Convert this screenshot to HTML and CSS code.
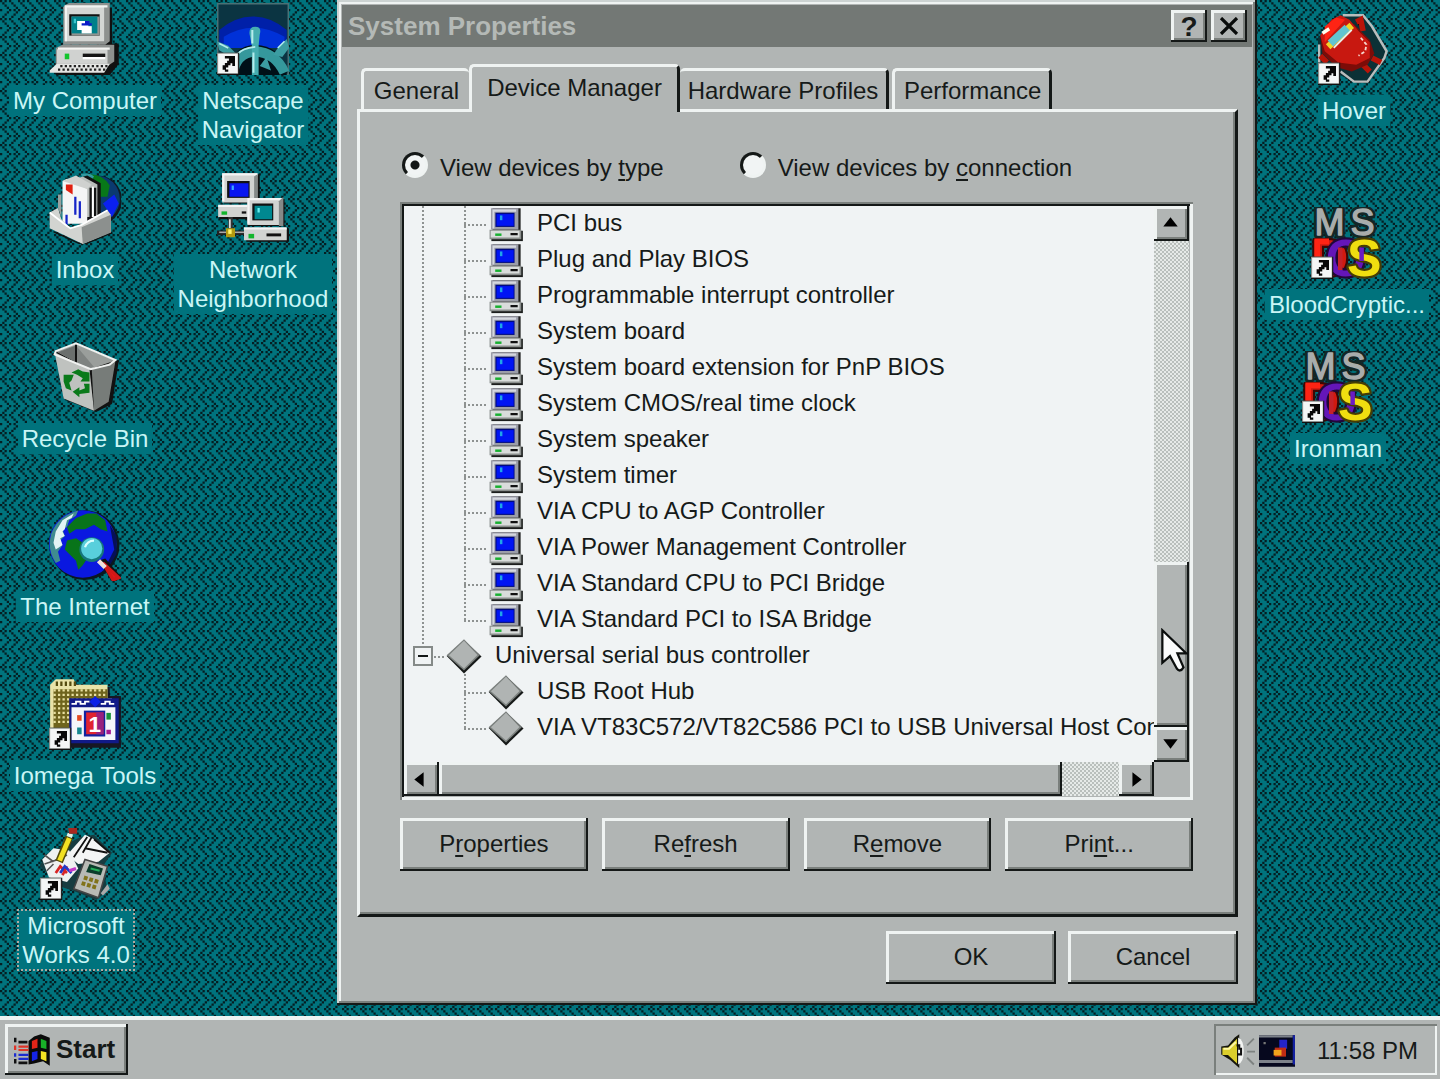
FILE: index.html
```html
<!DOCTYPE html>
<html lang="en">
<head>
<meta charset="utf-8">
<meta name="viewport" content="width=device-width, initial-scale=1">
<title>System Properties</title>
<link rel="stylesheet" href="styles.css">
</head>
<body>
<svg class="sprite" aria-hidden="true">
  <symbol id="shortcut" viewBox="0 0 10 10">
    <path d="M0 0H10V10H0Z" fill="#111"/><path d="M0 0H9.400V9.400H0Z" fill="#8a8f8c"/><path d="M.5 .5H9.200V9.200H.5Z" fill="#f4f6f6"/>
    <path d="M3.500 1.500H8V6H6.800V4.800H6V5.700H5V6.700H4V7.500H5V8.500H3.500V7.700H2.500V5.700H3.500V4.700H4.500V3.700H5.300V2.700H3.500Z" fill="#080808"/>
  </symbol>
  <symbol id="device" viewBox="0 0 16 16">
    <path d="M2 1H14.500V11H2Z" fill="#222"/><path d="M1.300 1H13.500V10.500H1.300Z" fill="#9b9da8"/><path d="M2 1.600H12.500V2.500H2.800V10H2Z" fill="#d5d8df"/>
    <path d="M3.300 3H11.800V9.300H3.300Z" fill="#000a80"/><path d="M3.800 3.600H11.400V8.800H3.800Z" fill="#0014f4"/><path d="M5.300 4.200H6.400V6.300H5.300Z" fill="#1ea6e8"/>
    <path d="M1.500 11H15.500V15.600H1.500Z" fill="#1b1d1c"/><path d="M.7 10.600H14.800V14.800H.7Z" fill="#8b8f8d"/><path d="M1.200 11H14V14H1.200Z" fill="#d9dcdb"/>
    <path d="M3.200 12.200H6V13.300H3.200Z" fill="#18b030"/><path d="M10 12H13.200V13H10Z" fill="#111"/>
  </symbol>
  <symbol id="diamond" viewBox="0 0 16 16">
    <path d="M8 1L15.800 8.200L8 15.800L.3 8Z" fill="#161918"/><path d="M8 .6L15 7.700L8 14.400L.3 7.700Z" fill="#7b807e"/><path d="M8 1.200L14 7.600L8 13.600L1.300 7.700Z" fill="#b0b4b3"/>
  </symbol>
  <symbol id="pc" viewBox="0 0 32 32">
    <path d="M9 2H28V18H31V27L27 32H3V30H25L28 25Z" fill="#111"/>
    <path d="M7 1L9 0H27V17L25 18.500H6.300V2Z" fill="#8e918f"/>
    <path d="M7 1.500H24.500V17H7Z" fill="#d4d6d4"/><path d="M7 1H26V2H8V17H7Z" fill="#f2f3f1"/>
    <path d="M9 5H22.500V14.500H9Z" fill="#111"/><path d="M10 6H22.500V14.500H10Z" fill="#8f9491"/><path d="M10 6H21.500V13.500H10Z" fill="#00808a"/>
    <path d="M12.500 8H17.500V12H12.500Z" fill="#fff"/><path d="M16 8H18V9H19V10H14.500V9H16Z" fill="#0a1ac8"/><path d="M14.500 10.300H19V13.500H14.500Z" fill="#fff"/><path d="M11 7H12V9H11Z" fill="#39c8d0"/>
    <path d="M3 20L6 18.500H29V26L26 28H3Z" fill="#8e918f"/><path d="M3.500 20.500H26V27H3.500Z" fill="#d0d2d0"/><path d="M4 19.800H27V20.800H4Z" fill="#f4f4f2"/>
    <path d="M7 22.500H9V25H7Z" fill="#12c52c"/><path d="M15 22.500H25V24H15Z" fill="#151515"/><path d="M15 24H25V25H15Z" fill="#fff"/>
    <path d="M3.500 27H27L24.500 31H.3V30Z" fill="#e4e5e3"/><path d="M5 28H27M4 29.600H26" stroke="#222" stroke-width="1" stroke-dasharray="1 1"/>
  </symbol>
  <symbol id="helm" viewBox="0 0 32 32">
    <path d="M0 0H32V32H0Z" fill="#0b3442"/><path d="M1 17V12Q8 6 16 6T31 12V20H1Z" fill="#0020a8"/><path d="M3 15Q16 7 30 15V20H3Z" fill="#0031d8"/>
    <path d="M.3 .3H31.700V31.700H.3Z" fill="none" stroke="#4a7074" stroke-width=".7"/><path d="M0 32H32V33H0Z" fill="#000"/>
    <path d="M5 32Q6 19 17 18.500Q28 19 31 30V32Z" fill="#001018"/>
    <path d="M7 32Q8 22 17 21.500Q26 22 30 31" fill="none" stroke="#35989c" stroke-width="4.500"/>
    <path d="M14.500 14Q14 10.500 17 10.500T19 14L18.500 19V32H15.500V19Z" fill="#46adb0"/><path d="M15.700 12V18M16.200 22V31" stroke="#b5ecec" stroke-width=".9"/>
    <path d="M0 17L5 19L8 22L6 24L1 21Z M31 16L27 20L25 23L29 24L32 20Z M22 24L19 28L24 30Z" fill="#3c9da2"/><path d="M1 18L5 20M30 17L27 20M9 23Q11 20 17 19.500" stroke="#b5ecec" stroke-width=".7" fill="none"/>
    <use href="#shortcut" x="0" y="22" width="10" height="10"/>
  </symbol>
  <symbol id="inbox" viewBox="0 0 32 32">
    <circle cx="21.500" cy="12.500" r="11" fill="#101820"/><circle cx="21" cy="12" r="10.500" fill="#0a3a70"/><path d="M18 1Q24 1 27 6L26 11H22L18 7Z" fill="#087818"/><path d="M24 14L29 10L31 14L28 20Z" fill="#0b20f0"/><path d="M14 1Q18 0 20 2L18 5Z" fill="#329aa0"/>
    <path d="M12 3L17 1.500L23 5V22L12 22Z" fill="#111"/><path d="M12 3L15 2L21.500 5.500V20H12Z" fill="#b9bdba"/><path d="M18.500 7V20M20.500 7V19.500" stroke="#111" stroke-width="1"/><path d="M19.500 6.500V20" stroke="#fff" stroke-width=".8"/>
    <path d="M6 4L8 3L17 7.500V23L6 23Z" fill="#f4f5f5"/><path d="M6 4L12 1.500L19 5.500L17 7.500Z" fill="#cfd1cf"/><path d="M7.500 5.500H10.500V10L9 9L7.500 8Z" fill="#e02010"/>
    <path d="M11.700 11V19M13.700 13V20.500M7.800 19V25" stroke="#1524c8" stroke-width="1"/>
    <path d="M.3 18L4 16L5.500 21L9.500 25L15 23L26 17L27.500 19V27L15 32L.3 25Z" fill="#d2d4d1"/><path d="M14.500 24.500L27.500 19V27L15 32Z" fill="#8c908e"/><path d="M.3 18L8 24L9.500 25L14.500 23.500L26 17" fill="none" stroke="#fff" stroke-width=".8"/><path d="M4 10V16L5.500 20V10Z" fill="#98a09d"/><path d="M28 27L15 32.500L2 26.500" fill="none" stroke="#111" stroke-width=".6"/>
  </symbol>
  <symbol id="network" viewBox="0 0 32 32">
    <path d="M3 1H19V14H3ZM1 15H15V21H1Z" fill="#111"/><path d="M2.300 .5H18V13.500H2.300Z" fill="#d1d3d1"/><path d="M2.300 .5H18V1.500H3.300V13H2.300Z" fill="#f4f4f4"/><path d="M16.500 2L18 1V13H16.500Z" fill="#858988"/><path d="M4.500 4H14.500V11.500H4.500Z" fill="#111"/><path d="M5.500 5H14V11H5.500Z" fill="#0816f0"/><path d="M6.500 6H7.500V8H6.500Z" fill="#3aa8ff"/>
    <path d="M.5 15H14V20H.5Z" fill="#d1d3d1"/><path d="M.5 14.600H16V15.600H.5Z" fill="#f4f4f4"/><path d="M2 17.500H4.500V19H2Z" fill="#12b52c"/><path d="M11 17.500H13V18.500H11Z" fill="#111"/>
    <path d="M6 20V26" stroke="#333" stroke-width="2"/><path d="M5.700 21V25" stroke="#ddd" stroke-width=".8"/><path d="M0 27H12" stroke="#222" stroke-width="2"/><path d="M1 26.800H12" stroke="#aaa" stroke-width=".7"/><path d="M4 25H8V29H4Z" fill="#b29a10"/><path d="M5 25.500H6.500V27.500H5Z" fill="#fff46a"/>
    <path d="M14 12H30V24H14ZM13 25H32V31H13Z" fill="#111"/><path d="M13.500 11.500H29V23.500H13.500Z" fill="#d1d3d1"/><path d="M13.500 11.500H29V12.500H14.500V23H13.500Z" fill="#f4f4f4"/><path d="M27.500 13L29.500 11V24H27.500Z" fill="#858988"/><path d="M15.700 14H25V21.500H15.700Z" fill="#111"/><path d="M16.700 15H24.500V21H16.700Z" fill="#008890"/><path d="M18 16H19V18H18Z" fill="#6ee"/>
    <path d="M12 25H31V30.300H12Z" fill="#d1d3d1"/><path d="M12 24.600H31V25.600H12Z" fill="#f4f4f4"/><path d="M14 27.500H16.500V29.500H14Z" fill="#12b52c"/><path d="M22 27.300H28.500V28.600H22Z" fill="#111"/>
  </symbol>
  <symbol id="bin" viewBox="0 0 32 32">
    <path d="M3 4L13 2L31 9L28 28L21 31.500L7 26Z" fill="#111"/><path d="M2.500 5L18 12.500L20 31L6.500 25.500Z" fill="#bfc2bf"/><path d="M19 12.500L29.500 9L26.500 27L20 31Z" fill="#777c79"/><path d="M3 4.500L12 1.300L29.500 8.700L18 12.500Z" fill="#9a9e9b"/><path d="M4 5L12 2V9.500Z" fill="#6b6f6d"/><path d="M12 2L20 11.500L18 12L12 9.500Z" fill="#7f8381"/><path d="M12 1.500V10" stroke="#111" stroke-width=".9"/>
    <path d="M3 4.500L12 1L29.500 8.500L27 10.500L18.500 12.500L2.500 6Z" fill="none" stroke="#f0f2f0" stroke-width=".9"/>
    <path d="M10 14L13 12.500L15 13.500L18 14V18H14L15 16.500L12.500 15ZM6.500 15H11L10 17.500L9 18.500L10 22L7.500 21L6.500 18ZM18 19V23L13.500 23.500V25L10.500 22.500L13.500 20.500V22L16 21L15.500 19Z" fill="#0a7a1a"/>
  </symbol>
  <symbol id="internet" viewBox="0 0 32 32">
    <circle cx="15.800" cy="16" r="15.500" fill="#0a1820"/><circle cx="15" cy="15.500" r="15" fill="#0a18e0"/><path d="M1 11Q4 3 13 .7L12 3L9 5L8 8L6 9L7 12L5 14L6 16L4 19L5 23L3 24Q-1 18 1 11Z" fill="#3f8c90"/><path d="M3 10L6 5L11 2L10 4L8 5L7 9L6 10L7 12L5 13L6 16L3 18L2 15Z" fill="#e2f4f4"/>
    <path d="M12 4L17 2H21L25 5L26 10L23 9L20 7L16 9H12L9 11L8 8ZM8 14L12 13L15 15L14 19L17 22L15 25L13 27L12 23L9 20L7 18Z" fill="#08741a"/><path d="M27 7L30 12V20L27 25L24 28L29 18Z" fill="#061058"/>
    <circle cx="19" cy="18" r="5.500" fill="#16767c"/><circle cx="19" cy="17.600" r="4.700" fill="#58cfdc"/><path d="M16 17Q17 14 20 14" stroke="#d8ffff" stroke-width="1" fill="none"/>
    <path d="M22 23L25 22L32 30L30 32H28Z" fill="#111"/><path d="M24 24L31 30.500L28.500 31.500Z" fill="#e41818" stroke="#d01818" stroke-width="1.500"/><path d="M22 23L25 26" stroke="#f0e0d8" stroke-width="2"/>
  </symbol>
  <symbol id="tools" viewBox="0 0 32 32">
    <path d="M1 4L3 1H11L13 4H27V8H32V31H10L2 26Z" fill="#171723"/><path d="M.5 3L3 .5H11L12 3H26V9H28V25H.5Z" fill="#e9e3a8"/><path d="M2 5H26V25H2Z" fill="#6e641d"/><path d="M2 5.500H26M2 7.500H26M2 9.500H26M2 11.500H9M2 13.500H9M2 15.500H9M2 17.500H9M2 19.500H9" stroke="#e8dfa0" stroke-dasharray="1 1"/><path d="M3 2.500H12" stroke="#554c10" stroke-dasharray="1 1" stroke-width="2"/>
    <path d="M9 9H31V29H9Z" fill="#111a88"/><path d="M10 13H29.500V27.500H10Z" fill="#f5f6fa"/><path d="M10 11.500H12V10.500H14V11.500H16V10.500H18M23 11.500H25V10.500H27V11.500H29" stroke="#fff" stroke-width=".8" fill="none"/><path d="M20.500 8L23 10.500L20.500 13L18 10.500Z" fill="#0b20e8"/>
    <path d="M15.500 14.500H25V26H15.500Z" fill="#1322a0"/><path d="M16.500 15.300H24.200V25H16.500Z" fill="#e02430"/><path d="M21 15.300H24.200V25H21Z" fill="#982080"/>
    <path d="M12.500 16.500H14.500V19H12.500Z" fill="#e34a20"/><path d="M25.500 15.500H27.500V18.500H25.500Z" fill="#18933a"/><path d="M12.500 22H14.500V25H12.500Z" fill="#178890"/><path d="M25.500 23H27.500V25H25.500Z" fill="#a41890"/>
    <text x="20.300" y="24" text-anchor="middle" font-family="Liberation Sans" font-weight="700" font-size="10" fill="#fff">1</text>
    <use href="#shortcut" x="0" y="22" width="10" height="10"/>
  </symbol>
  <symbol id="works" viewBox="0 0 32 32">
    <path d="M18 4L24 3L32 11L28 17L30 28L25 32L15 28L9 26L0 17L2 12Z" fill="#173c40"/>
    <path d="M12 12L20 3L24 5L31 11L26 15L17 16Z" fill="#f4f5f5"/><path d="M15 13L21 4M19 11L23 4M20 9L30 11M24 5L31 11" stroke="#111" stroke-width=".8"/>
    <path d="M1 14L6 9L13 10L17 18L12 24L4 22Z" fill="#eff1f1"/><path d="M2 12L6 15M2 16L8 14L12 12M3 19L6 16" stroke="#555" stroke-width=".7"/>
    <path d="M7 20L9 17L12 20M10 21L12 17" stroke="#d82424" stroke-width="1.200" fill="none"/><path d="M9 20L11 17L14 20" stroke="#2138c8" stroke-width="1.200" fill="none"/><path d="M13 19L16 18" stroke="#c43ac8" stroke-width="1.500"/>
    <path d="M8.500 15L13 4" stroke="#544a08" stroke-width="3.500"/><path d="M8.700 14.500L13 4.500" stroke="#f2e022" stroke-width="2.200"/><path d="M13 4L13.500 2.500" stroke="#e0f4e8" stroke-width="2.500"/><path d="M12.500 0H16.500V2.500H13Z" fill="#a82820"/>
    <path d="M20 14L30 17L26 31L15 27Z" fill="#b8bab5" stroke="#444" stroke-width=".7"/><path d="M22 16L28 18L27 21L20.500 19.500Z" fill="#0b3d2a"/><path d="M22.500 18L26.500 19" stroke="#24b05a" stroke-width="1"/><path d="M19.500 22L26 24M18.500 24.500L25 26.500" stroke="#81731a" stroke-width="1.800" stroke-dasharray="1.700 .8"/>
    <path d="M27 29L30 25L31 27L28 30Z" fill="#aaa"/>
    <use href="#shortcut" x="0" y="22" width="10" height="10"/>
  </symbol>
  <symbol id="hover" viewBox="0 0 32 32">
    <path d="M10 1H20L30 15V21L22 31H17L0 23V11Z" fill="#0b3136"/><path d="M11 1H20L24 6L30.500 17L29.500 20L22 30.500H16L10 26M.5 22V14" fill="none" stroke="#b9bdbc" stroke-width="1.100"/>
    <path d="M17 4L19 3L20 8M19 22L23 26M24 20L28 22M1 19L4 22" stroke="#b81408" stroke-width="2.500"/>
    <path d="M1 10L6 3L10 1.500L16 5L23 12L25 18L22 23L15 26L8 24L2 18Z" fill="#7c0c08"/><path d="M1 10L6 3L10 1L14 3L18 8L23 13L23 20L17 23L9 22L3 17Z" fill="#c81810"/><path d="M3 6L8 2L12 3L3 13Z" fill="#ff2414"/>
    <path d="M4.500 15L15 5.500" stroke="#f2d428" stroke-width="3"/><path d="M5.500 13.500L13 6.500" stroke="#62c4d0" stroke-width="3.500"/><path d="M7 15.500L15 7.500" stroke="#e8f4ee" stroke-width=".8"/><path d="M2 9L5 7" stroke="#ffe" stroke-width="1.500"/><path d="M19 11L21.500 14L21 17L18 19" stroke="#f5d8ce" stroke-width=".8" stroke-dasharray="1.500 1" fill="none"/>
    <use href="#shortcut" x="0" y="22" width="10" height="10"/>
  </symbol>
  <symbol id="dos" viewBox="0 0 32 32">
    <g font-family="Liberation Sans" font-size="16" stroke-linejoin="round"><g fill="none" stroke="#142626" stroke-width="3"><text x="1.500" y="12.500">M</text><text x="17.500" y="12.500">S</text></g><g fill="#a9adac" stroke="#a9adac" stroke-width=".6"><text x="1.500" y="12.500">M</text><text x="17.500" y="12.500">S</text></g></g>
    <g font-family="Liberation Sans" font-weight="700" font-size="23" stroke-linejoin="round" paint-order="stroke" stroke-width="2"><text x="0" y="30.500" fill="#d01a10" stroke="#3c0805">D</text><text x="6.500" y="30.500" fill="#6416b8" stroke="#20083a">O</text><text x="16" y="30.500" fill="#f0de10" stroke="#453c05">S</text></g>
    <path d="M1.500 14H8V16.500H4V22H1.500Z" fill="#ff2414"/><path d="M13 18V28" stroke="#c4222a" stroke-width="2"/><path d="M21.500 18H23.500V24H21.500Z" fill="#6b1cc4"/>
    <use href="#shortcut" x="0" y="22" width="10" height="10"/>
  </symbol>
</svg>

<main class="desktop">
  <nav class="shortcuts" aria-label="Desktop">
    <a class="shortcut at-computer" href="#"><svg><use href="#pc"/></svg><span>My Computer</span></a>
    <a class="shortcut at-netscape" href="#"><svg><use href="#helm"/></svg><span>Netscape<br>Navigator</span></a>
    <a class="shortcut at-inbox" href="#"><svg><use href="#inbox"/></svg><span>Inbox</span></a>
    <a class="shortcut at-network" href="#"><svg><use href="#network"/></svg><span>Network<br>Neighborhood</span></a>
    <a class="shortcut at-bin" href="#"><svg><use href="#bin"/></svg><span>Recycle Bin</span></a>
    <a class="shortcut at-internet" href="#"><svg><use href="#internet"/></svg><span>The Internet</span></a>
    <a class="shortcut at-tools" href="#"><svg><use href="#tools"/></svg><span>Iomega Tools</span></a>
    <a class="shortcut at-works focused" href="#"><svg><use href="#works"/></svg><span>Microsoft<br>Works 4.0</span></a>
    <a class="shortcut at-hover" href="#"><svg><use href="#hover"/></svg><span>Hover</span></a>
    <a class="shortcut at-blood" href="#"><svg><use href="#dos"/></svg><span>BloodCryptic...</span></a>
    <a class="shortcut at-ironman" href="#"><svg><use href="#dos"/></svg><span>Ironman</span></a>
  </nav>

  <section class="window" aria-labelledby="window-title">
    <header class="titlebar">
      <h1 id="window-title">System Properties</h1>
      <button class="caption bevel" type="button" aria-label="Help">?</button>
      <button class="caption bevel" type="button" aria-label="Close"><svg viewBox="0 0 10 9"><path d="M1 .5L9 8.500M9 .5L1 8.500" stroke="#080b0a" stroke-width="1.600"/></svg></button>
    </header>

    <div class="content">
      <div class="tabs" role="tablist">
        <button class="tab before-selected" type="button" role="tab">General</button>
        <button class="tab selected" type="button" role="tab" aria-selected="true">Device Manager</button>
        <button class="tab after-selected" type="button" role="tab">Hardware Profiles</button>
        <button class="tab" type="button" role="tab">Performance</button>
      </div>

      <div class="panel" role="tabpanel">
        <div class="views">
          <label class="view"><input type="radio" name="view" checked><span>View devices by <u>t</u>ype</span></label>
          <label class="view"><input type="radio" name="view"><span>View devices by <u>c</u>onnection</span></label>
        </div>

        <div class="listbox">
          <ul class="tree">
            <li><i class="guide line"></i><i class="guide tee"></i><svg><use href="#device"/></svg><span>PCI bus</span></li>
            <li><i class="guide line"></i><i class="guide tee"></i><svg><use href="#device"/></svg><span>Plug and Play BIOS</span></li>
            <li><i class="guide line"></i><i class="guide tee"></i><svg><use href="#device"/></svg><span>Programmable interrupt controller</span></li>
            <li><i class="guide line"></i><i class="guide tee"></i><svg><use href="#device"/></svg><span>System board</span></li>
            <li><i class="guide line"></i><i class="guide tee"></i><svg><use href="#device"/></svg><span>System board extension for PnP BIOS</span></li>
            <li><i class="guide line"></i><i class="guide tee"></i><svg><use href="#device"/></svg><span>System CMOS/real time clock</span></li>
            <li><i class="guide line"></i><i class="guide tee"></i><svg><use href="#device"/></svg><span>System speaker</span></li>
            <li><i class="guide line"></i><i class="guide tee"></i><svg><use href="#device"/></svg><span>System timer</span></li>
            <li><i class="guide line"></i><i class="guide tee"></i><svg><use href="#device"/></svg><span>VIA CPU to AGP Controller</span></li>
            <li><i class="guide line"></i><i class="guide tee"></i><svg><use href="#device"/></svg><span>VIA Power Management Controller</span></li>
            <li><i class="guide line"></i><i class="guide tee"></i><svg><use href="#device"/></svg><span>VIA Standard CPU to PCI Bridge</span></li>
            <li><i class="guide line"></i><i class="guide end"></i><svg><use href="#device"/></svg><span>VIA Standard PCI to ISA Bridge</span></li>
            <li><i class="guide end"><button class="collapse" type="button" aria-label="Collapse"></button></i><svg><use href="#diamond"/></svg><span>Universal serial bus controller</span></li>
            <li><i class="guide"></i><i class="guide tee"></i><svg><use href="#diamond"/></svg><span>USB Root Hub</span></li>
            <li><i class="guide"></i><i class="guide end"></i><svg><use href="#diamond"/></svg><span>VIA VT83C572/VT82C586 PCI to USB Universal Host Controller</span></li>
          </ul>
          <div class="scroll vertical">
            <button class="arrow bevel" type="button" aria-label="Scroll up"><svg viewBox="0 0 16 16"><path d="M8 5L11.500 9.500H4.500Z"/></svg></button>
            <div class="track"></div>
            <div class="thumb bevel"></div>
            <button class="arrow bevel" type="button" aria-label="Scroll down"><svg viewBox="0 0 16 16"><path d="M8 10L11.500 5.500H4.500Z"/></svg></button>
          </div>
          <div class="scroll horizontal">
            <button class="arrow bevel" type="button" aria-label="Scroll left"><svg viewBox="0 0 16 16"><path d="M5 8L9.500 4.500V11.500Z"/></svg></button>
            <div class="thumb bevel"></div>
            <div class="track"></div>
            <button class="arrow bevel" type="button" aria-label="Scroll right"><svg viewBox="0 0 16 16"><path d="M11 8L6.500 4.500V11.500Z"/></svg></button>
          </div>
        </div>

        <div class="actions">
          <button class="push bevel" type="button">P<u>r</u>operties</button>
          <button class="push bevel" type="button">Re<u>f</u>resh</button>
          <button class="push bevel" type="button">R<u>e</u>move</button>
          <button class="push bevel" type="button">Pri<u>n</u>t...</button>
        </div>
      </div>

      <footer class="confirm">
        <button class="push bevel" type="button">OK</button>
        <button class="push bevel" type="button">Cancel</button>
      </footer>
    </div>
  </section>

  <svg class="pointer" viewBox="0 0 12 20" aria-hidden="true"><path d="M.6 1V15.500L4 12.500L7 18Q8.500 20 10 17.500L7.300 11.300H11.300Z" fill="#fbfcfc" stroke="#0b0e0d" stroke-width="1"/></svg>
</main>

<footer class="taskbar">
  <button class="start bevel" type="button">
    <svg viewBox="0 0 17 14" aria-hidden="true">
      <path d="M6.500 3L9 1L12 0L16 1.500V14L13 12L9 13L6.500 13.500Z" fill="#0a0a0a"/>
      <path d="M8 3L10.500 2V6L8 6.500Z" fill="#e32418"/><path d="M12 2L14.500 3V6.500L12 6Z" fill="#18b028"/><path d="M8 8L10.500 7.500V11L8 12Z" fill="#1524e8"/><path d="M12 7.500L14.500 8V12L12 11Z" fill="#f4e324"/>
      <path d="M2 3.500H6M2 12.800H6M.5 1.500V3.500M.5 11V13" stroke="#111" stroke-width="1.200"/><path d="M2 5.500H6.500M2 7H6.500M.5 5V7" stroke="#e03428" stroke-width="1"/><path d="M2 9.200H6.500M2 11H6.500M.5 8.500V10" stroke="#1c2cd0" stroke-width="1"/>
    </svg>
    <span>Start</span>
  </button>
  <div class="tray">
    <svg class="tray-icon" viewBox="0 0 16 16" aria-label="Volume">
      <path d="M7 2L9 .5V15.500L5 12L1 9.500V6L4 5.500Z" fill="#16160c"/><path d="M1.500 6.500H4L8 2.500V13.500L4 9.800H1.500Z" fill="#dccf2c"/><path d="M2 7H4.500L7.500 4" stroke="#fff9a8" stroke-width=".8" fill="none"/>
      <path d="M8.500 2Q11 3 11 8T8.500 14Z" fill="#f2f4f2"/><path d="M7.800 5.500H9V7H9.800V9.500H8" stroke="#111" fill="none" stroke-width=".9"/>
      <path d="M12.500 5.500L15.500 2.500M12.500 8.300H16M12.500 11L15.500 14" stroke="#7d8280" stroke-width=".8"/>
    </svg>
    <svg class="tray-icon" viewBox="0 0 16 16" aria-label="Display">
      <path d="M0 1H16V15H0Z" fill="#06081e"/><path d="M0 1H15V2H0ZM0 12H15V13.300H0Z" fill="#7d828a"/><path d="M15 1H16V14H15Z" fill="#1420a0"/><path d="M9 3H12.500V7H9Z" fill="#2424c8"/><path d="M7 6.500H12V10.500H7Z" fill="#c02c14"/><path d="M6.500 7.500H10V10H6.500Z" fill="#f0a41c"/><path d="M2 4H3V5H2Z" fill="#777"/>
    </svg>
    <time>11:58 PM</time>
  </div>
</footer>
</body>
</html>
```
FILE: styles.css
```css
:root {
  --face: #b1b5b4;
  --light: #eff3f2;
  --shade: #7a7f7c;
  --dark: #141817;
  --teal: #00737d;
  --dots: repeating-linear-gradient(#8e9291 0 2px, transparent 2px 4px);
  --dots-across: repeating-linear-gradient(90deg, #8e9291 0 2px, transparent 2px 4px);
}

* { box-sizing: border-box; }

body {
  margin: 0;
  min-height: 100vh;
  display: flex;
  flex-direction: column;
  font: 24px/29px "Liberation Sans", Arial, sans-serif;
  color: #161a19;
}

button {
  font: inherit;
  color: inherit;
  border: 0;
  margin: 0;
  padding: 0;
  background: var(--face);
}

u { text-underline-offset: 3px; text-decoration-thickness: 2px; text-decoration-skip-ink: none; }

.sprite { display: none; }

.bevel {
  background: var(--face);
  box-shadow: inset -2px -2px var(--dark), inset 3px 3px var(--light), inset -4px -4px var(--shade);
}

/* Desktop with a woven chevron pattern */
.desktop {
  position: relative;
  flex: 1;
  min-height: 1016px;
  background-color: var(--teal);
  background-image: url("data:image/svg+xml,%3Csvg xmlns='http://www.w3.org/2000/svg' viewBox='0 0 8 8'%3E%3Cpath fill='%23041e22' d='M0 0h1v1h-1zM2 0h1v1h-1zM4 0h1v1h-1zM1 1h1v1h-1zM5 1h1v1h-1zM2 2h1v1h-1zM6 2h1v1h-1zM3 3h1v1h-1zM7 3h1v1h-1zM0 4h1v1h-1zM4 4h1v1h-1zM6 4h1v1h-1zM3 5h1v1h-1zM7 5h1v1h-1zM2 6h1v1h-1zM6 6h1v1h-1zM1 7h1v1h-1zM5 7h1v1h-1z'/%3E%3C/svg%3E");
  background-size: 18px 18px;
}

.shortcut {
  position: absolute;
  width: 168px;
  display: flex;
  flex-direction: column;
  align-items: center;
  gap: 10px;
  color: #c9f6f6;
  text-align: center;
  text-decoration: none;
}
.shortcut svg { width: 72px; height: 72px; overflow: visible; }
.shortcut span { padding: 1px 4px; background: var(--teal); white-space: nowrap; }
.focused span { outline: 2px dotted #b0a9a0; outline-offset: -1px; }

.at-computer { left: 1px; top: 3px; }
.at-netscape { left: 169px; top: 3px; }
.at-inbox { left: 1px; top: 172px; }
.at-network { left: 169px; top: 172px; }
.at-bin { left: 1px; top: 341px; }
.at-internet { left: 1px; top: 509px; }
.at-tools { left: 1px; top: 678px; }
.at-works { left: -8px; top: 828px; }
.at-hover { right: 2px; top: 13px; }
.at-blood { right: 9px; top: 207px; }
.at-ironman { right: 18px; top: 351px; }

/* Dialog */
.window {
  position: absolute;
  top: 0;
  left: 337px;
  right: 183px;
  padding: 5px;
  background: var(--face);
  box-shadow: inset -2px -2px var(--dark), inset 2px 2px #ccd3d2, inset -4px -4px var(--shade), inset 4px 4px var(--light);
}

.titlebar {
  display: flex;
  align-items: center;
  gap: 4px;
  height: 42px;
  padding: 0 5px 0 6px;
  background: #737875;
}
.titlebar h1 { flex: 1; margin: 0; font-size: 26px; line-height: 29px; color: #b4b9b6; }
.caption { width: 36px; height: 32px; display: grid; place-items: center; font-weight: 700; font-size: 28px; }
.caption svg { width: 20px; height: 18px; }

.content { padding: 17px 14px 16px 15px; }

.tabs { display: flex; align-items: flex-end; padding-left: 4px; }
.tab {
  height: 41px;
  padding: 0 8px 0 9px;
  border: solid var(--light);
  border-width: 3px 0 0 3px;
  border-right: 3px solid var(--dark);
  border-radius: 5px 5px 0 0;
  white-space: nowrap;
}
.before-selected { width: 108px; border-right: 0; padding: 0; }
.selected { position: relative; z-index: 1; width: 211px; height: 48px; margin-bottom: -3px; padding: 0 0 5px; }
.after-selected { width: 209px; border-left: 0; padding: 0; margin-right: 3px; }

.panel {
  padding: 40px 42px 43px 40px;
  border: 3px solid var(--light);
  border-right-color: var(--dark);
  border-bottom-color: var(--dark);
  box-shadow: inset -2px -2px var(--shade);
}

.views { display: flex; gap: 76px; padding-left: 2px; }
.view { display: flex; align-items: center; gap: 12px; height: 30px; }
.view input {
  appearance: none;
  width: 26px;
  height: 26px;
  margin: 0 0 4px;
  border: 3px solid var(--dark);
  border-right-color: var(--light);
  border-bottom-color: var(--light);
  border-radius: 50%;
  background: #f1f4f4;
}
.view input:checked { background: radial-gradient(circle, var(--dark) 0 4px, #f1f4f4 5px); }

.listbox {
  display: grid;
  grid-template: 556px 34px / 1fr 35px;
  margin-top: 20px;
  padding: 4px;
  background: var(--face);
  box-shadow: inset 2px 2px var(--shade), inset -3px -3px var(--light), inset 4px 4px var(--dark);
}

.tree { min-width: 0; margin: 0; padding: 0; overflow: hidden; list-style: none; background: #f0f3f4; }
.tree li { display: flex; align-items: center; height: 36px; white-space: nowrap; }
.tree span { padding-bottom: 3px; }
.tree svg { flex: none; width: 36px; height: 36px; margin-right: 13px; }
.guide { flex: none; display: flex; align-items: center; width: 42px; height: 36px; padding-left: 9px; background-repeat: no-repeat; }
.line { background-image: var(--dots); background-position: 18px 0; background-size: 2px 36px; }
.tee { background-image: var(--dots), var(--dots-across); background-position: 18px 0, 18px 18px; background-size: 2px 36px, 26px 2px; }
.end { background-image: var(--dots), var(--dots-across); background-position: 18px 0, 18px 18px; background-size: 2px 18px, 26px 2px; }
.collapse {
  width: 20px;
  height: 20px;
  border: 2px solid #858a88;
  background: linear-gradient(var(--dark), var(--dark)) center / 10px 2px no-repeat #f0f3f4;
}

.scroll { display: flex; }
.vertical { flex-direction: column; }
.arrow { flex: none; width: 35px; height: 35px; }
.arrow svg { display: block; width: 33px; height: 33px; }
.horizontal .arrow { height: 34px; }
.track { flex: 1; background: repeating-conic-gradient(#b9bfbc 0 25%, #e6eae8 0 50%) 0 0 / 4px 4px; }
.vertical .thumb { height: 165px; }
.horizontal .thumb { width: 83%; }

.actions { display: grid; grid-template-columns: repeat(4, 1fr); gap: 14px; margin-top: 18px; }
.push { height: 53px; padding-bottom: 3px; }
.confirm { display: flex; justify-content: flex-end; gap: 12px; margin-top: 14px; }
.confirm .push { width: 170px; }

.pointer { position: absolute; left: 1161px; top: 628px; width: 27px; height: 45px; }

/* Taskbar */
.taskbar {
  display: flex;
  justify-content: space-between;
  align-items: flex-start;
  height: 63px;
  padding: 4px 3px 0 5px;
  background: var(--face);
  border-top: 4px solid var(--light);
}
.start { display: flex; align-items: center; gap: 4px; width: 123px; height: 51px; padding-left: 9px; font-weight: 700; font-size: 26px; }
.start svg { width: 38px; height: 32px; }
.tray {
  display: flex;
  align-items: center;
  gap: 4px;
  height: 51px;
  padding: 2px 19px 0 5px;
  box-shadow: inset 2px 2px var(--shade), inset -2px -2px var(--light);
}
.tray-icon { width: 36px; height: 36px; }
.tray time { margin-left: 18px; }
```
